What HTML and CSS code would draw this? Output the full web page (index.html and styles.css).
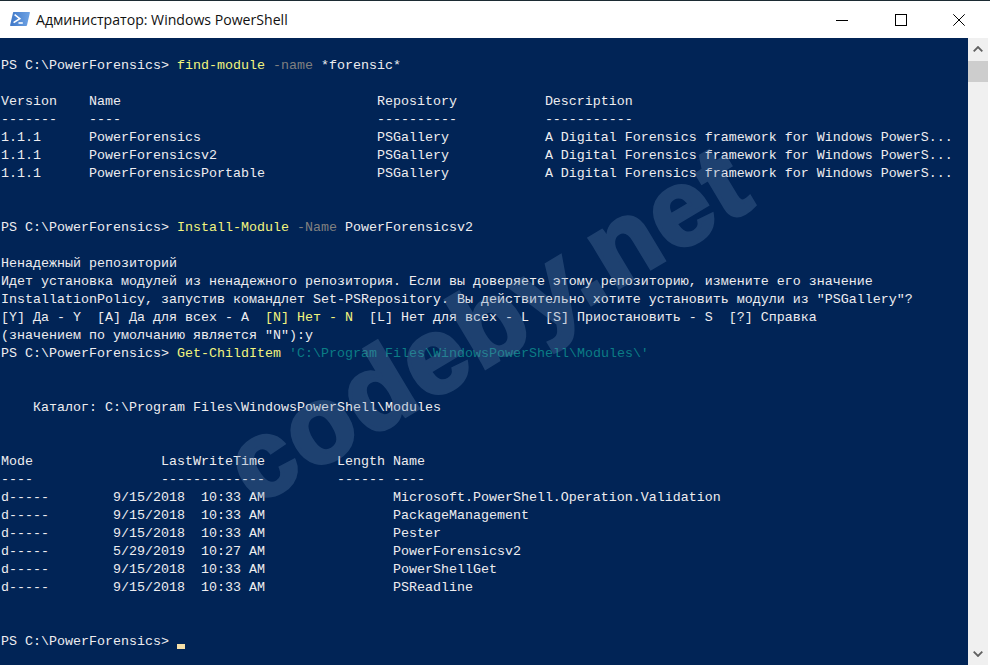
FILE: index.html
```html
<!DOCTYPE html>
<html lang="ru">
<head>
<meta charset="utf-8">
<title>Администратор: Windows PowerShell</title>
<link rel="stylesheet" href="styles.css">
</head>
<body>
<div class="window">
  <header class="titlebar">
    <svg class="app-icon" viewBox="0 0 20 16" width="20" height="16" aria-hidden="true">
      <defs><linearGradient id="ps" x1="0" y1="0" x2="1" y2="0"><stop offset="0" stop-color="#3f78c8"/><stop offset="1" stop-color="#6fa3e4"/></linearGradient></defs>
      <path d="M3.6 1H19.3c.5 0 .7.3.6.7L17 14.300c-.1.4-.4.7-.9.7H.7c-.5 0-.7-.3-.6-.7L3 1.700C3.100 1.300 3.200 1 3.600 1z" fill="url(#ps)"/>
      <path d="M4.600 3.600l5.200 4-6.200 4" fill="none" stroke="#fff" stroke-width="1.600"/>
      <path d="M8.500 12h4.300" stroke="#fff" stroke-width="1.600"/>
    </svg>
    <span class="title">Администратор: Windows PowerShell</span>
    <div class="controls">
      <svg viewBox="0 0 12 12" width="12" height="12" aria-hidden="true"><path d="M0 6.500h12" stroke="#000" stroke-width="1"/></svg>
      <svg viewBox="0 0 12 12" width="12" height="12" aria-hidden="true"><rect x=".5" y=".5" width="11" height="11" fill="none" stroke="#000"/></svg>
      <svg viewBox="0 0 12 12" width="12" height="12" aria-hidden="true"><path d="M.3.300l11.400 11.400M11.700.300L.3 11.700" stroke="#000" stroke-width="1"/></svg>
    </div>
  </header>
  <div class="content">
    <main class="console">
<pre class="text">
PS C:\PowerForensics&gt; <span class="cmd">find-module</span> <span class="par">-name</span> *forensic*

Version    Name                                Repository           Description
-------    ----                                ----------           -----------
1.1.1      PowerForensics                      PSGallery            A Digital Forensics framework for Windows PowerS...
1.1.1      PowerForensicsv2                    PSGallery            A Digital Forensics framework for Windows PowerS...
1.1.1      PowerForensicsPortable              PSGallery            A Digital Forensics framework for Windows PowerS...


PS C:\PowerForensics&gt; <span class="cmd">Install-Module</span> <span class="par">-Name</span> PowerForensicsv2

Ненадежный репозиторий
Идет установка модулей из ненадежного репозитория. Если вы доверяете этому репозиторию, измените его значение
InstallationPolicy, запустив командлет Set-PSRepository. Вы действительно хотите установить модули из "PSGallery"?
[Y] Да - Y  [A] Да для всех - A  <span class="cmd">[N] Нет - N</span>  [L] Нет для всех - L  [S] Приостановить - S  [?] Справка
(значением по умолчанию является "N"):y
PS C:\PowerForensics&gt; <span class="cmd">Get-ChildItem</span> <span class="str">'C:\Program Files\WindowsPowerShell\Modules\'</span>


    Каталог: C:\Program Files\WindowsPowerShell\Modules


Mode                LastWriteTime         Length Name
----                -------------         ------ ----
d-----        9/15/2018  10:33 AM                Microsoft.PowerShell.Operation.Validation
d-----        9/15/2018  10:33 AM                PackageManagement
d-----        9/15/2018  10:33 AM                Pester
d-----        5/29/2019  10:27 AM                PowerForensicsv2
d-----        9/15/2018  10:33 AM                PowerShellGet
d-----        9/15/2018  10:33 AM                PSReadline


PS C:\PowerForensics&gt; <span class="cursor"></span></pre>
      <div class="watermark">codeby.net</div>
    </main>
    <aside class="scrollbar">
      <svg class="arrow-up" viewBox="0 0 10 6" width="10" height="6" aria-hidden="true"><path d="M.7 5.300L5 1l4.300 4.300" fill="none" stroke="#606060" stroke-width="1.800"/></svg>
      <div class="thumb"></div>
      <div class="track"></div>
      <svg class="arrow-down" viewBox="0 0 10 6" width="10" height="6" aria-hidden="true"><path d="M.7.700L5 5 9.300.7" fill="none" stroke="#606060" stroke-width="1.800"/></svg>
    </aside>
  </div>
</div>
</body>
</html>
```
FILE: styles.css
```css
html, body {
  margin: 0;
  padding: 0;
  background: #fff;
}
.window {
  width: 990px;
  height: 666px;
  box-sizing: border-box;
  border-top: 1px solid #1c2b33;
  padding-bottom: 1px;
  display: flex;
  flex-direction: column;
  overflow: hidden;
}
.titlebar {
  height: 37px;
  flex: none;
  display: flex;
  align-items: center;
  background: #fff;
  padding-left: 10px;
}
.app-icon {
  flex: none;
  margin: 0 6px 2px 0;
}
.title {
  font: 14.1px "Open Sans", "Noto Sans", sans-serif;
  color: #111;
  white-space: nowrap;
}
.controls {
  margin-left: auto;
  display: flex;
  gap: 46.5px;
  padding-right: 25px;
  align-items: center;
}
.content {
  flex: 1;
  display: flex;
  min-height: 0;
  padding-right: 2px;
}
.console {
  flex: 1;
  position: relative;
  background: #012456;
  overflow: hidden;
}
.text {
  margin: 0;
  padding: 19px 0 0 1px;
  font: 13.33px/18px "Liberation Mono", monospace;
  color: #eeedf0;
  white-space: pre;
}
.cmd { color: #f2f47e; }
.par { color: #808080; }
.str { color: #0b7c85; }
.cursor {
  display: inline-block;
  width: 8px;
  height: 5px;
  vertical-align: -4px;
  background: #f5dfa8;
}
.watermark {
  position: absolute;
  left: 252px;
  top: 378px;
  font: 700 108px/1 "Liberation Sans", sans-serif;
  letter-spacing: 2.5px;
  color: #6a8cb4;
  -webkit-text-stroke: 4px #6a8cb4;
  opacity: 0.28;
  transform-origin: 0 85px;
  transform: rotate(-31deg);
  white-space: nowrap;
  pointer-events: none;
}
.scrollbar {
  width: 20px;
  flex: none;
  display: flex;
  flex-direction: column;
  align-items: center;
  background: #f0f0f0;
}
.arrow-up {
  flex: none;
  margin: 8px 0 9px;
}
.arrow-down {
  flex: none;
  margin: 0 0 8px;
}
.thumb {
  width: 100%;
  height: 21px;
  flex: none;
  background: #cdcdcd;
}
.track { flex: 1; }
```
